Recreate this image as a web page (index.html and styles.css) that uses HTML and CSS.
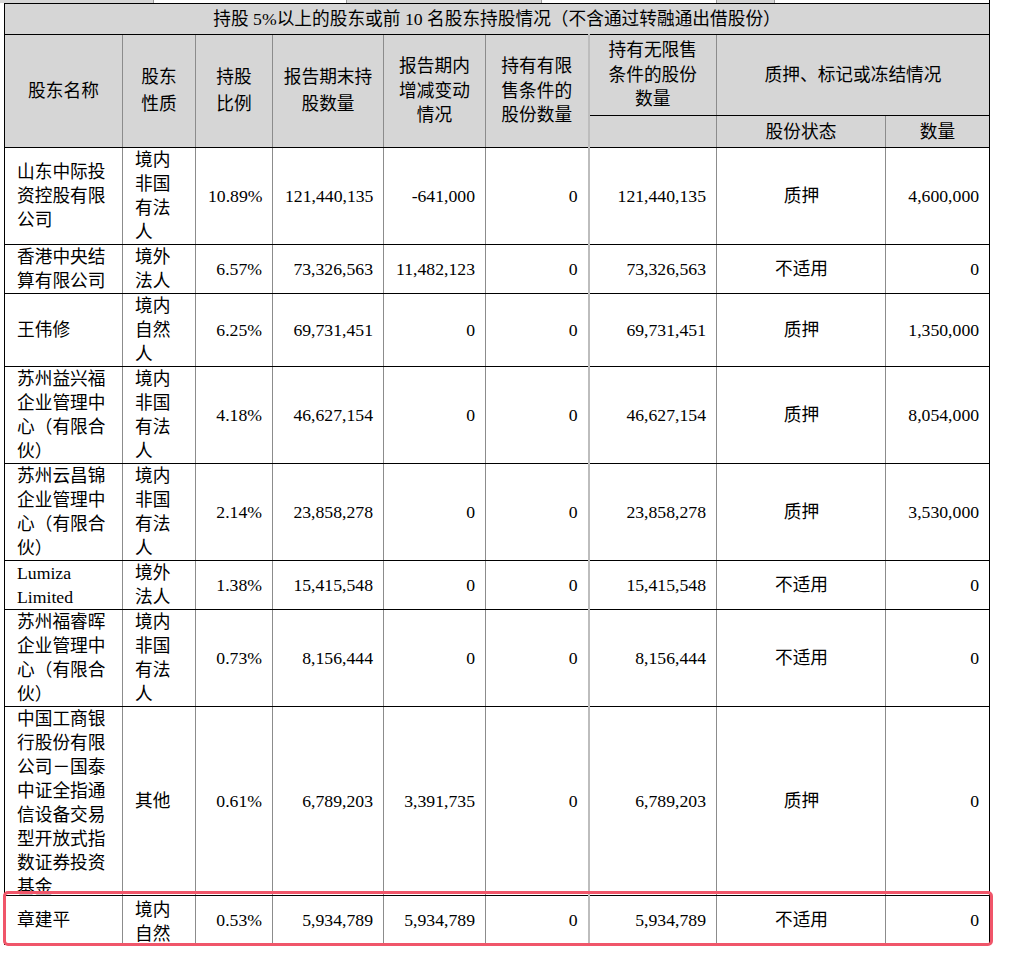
FILE: index.html
```html
<!DOCTYPE html>
<html lang="zh-CN">
<head>
<meta charset="utf-8">
<title>股东持股情况</title>
<link rel="stylesheet" href="styles.css">
</head>
<body>
<div class="page">
  <div class="prev-row">
    <span class="pc pc1"></span>
    <span class="pc pc2"></span>
    <span class="pc pc3"></span>
    <span class="pc pc4"></span>
    <span class="pc pc5"></span>
    <span class="pc pc6"></span>
  </div>
  <table class="holders">
    <colgroup>
      <col class="c1"><col class="c2"><col class="c3"><col class="c4"><col class="c5">
      <col class="c6"><col class="c7"><col class="c8"><col class="c9">
    </colgroup>
    <thead>
      <tr class="r-title">
        <th colspan="9" class="edge-l edge-r">持股 5%以上的股东或前 10 名股东持股情况（不含通过转融通出借股份）</th>
      </tr>
      <tr class="r-head1">
        <th rowspan="2" class="edge-l">股东名称</th>
        <th rowspan="2" class="two">股东<br>性质</th>
        <th rowspan="2" class="two">持股<br>比例</th>
        <th rowspan="2" class="two">报告期末持<br>股数量</th>
        <th rowspan="2">报告期内<br>增减变动<br>情况</th>
        <th rowspan="2">持有有限<br>售条件的<br>股份数量</th>
        <th class="split">持有无限售<br>条件的股份<br>数量</th>
        <th colspan="2" class="edge-r">质押、标记或冻结情况</th>
      </tr>
      <tr class="r-head2">
        <th class="split"></th>
        <th>股份状态</th>
        <th class="edge-r">数量</th>
      </tr>
    </thead>
    <tbody>
      <tr class="r97">
        <td class="name edge-l">山东中际投资控股有限公司</td>
        <td class="type">境内非国有法人</td>
        <td class="num">10.89%</td>
        <td class="num">121,440,135</td>
        <td class="num">-641,000</td>
        <td class="num">0</td>
        <td class="num split">121,440,135</td>
        <td class="status">质押</td>
        <td class="num edge-r">4,600,000</td>
      </tr>
      <tr class="r48">
        <td class="name edge-l">香港中央结算有限公司</td>
        <td class="type">境外法人</td>
        <td class="num">6.57%</td>
        <td class="num">73,326,563</td>
        <td class="num">11,482,123</td>
        <td class="num">0</td>
        <td class="num split">73,326,563</td>
        <td class="status">不适用</td>
        <td class="num edge-r">0</td>
      </tr>
      <tr class="r73">
        <td class="name edge-l">王伟修</td>
        <td class="type">境内自然人</td>
        <td class="num">6.25%</td>
        <td class="num">69,731,451</td>
        <td class="num">0</td>
        <td class="num">0</td>
        <td class="num split">69,731,451</td>
        <td class="status">质押</td>
        <td class="num edge-r">1,350,000</td>
      </tr>
      <tr class="r96">
        <td class="name edge-l">苏州益兴福企业管理中心（有限合伙）</td>
        <td class="type">境内非国有法人</td>
        <td class="num">4.18%</td>
        <td class="num">46,627,154</td>
        <td class="num">0</td>
        <td class="num">0</td>
        <td class="num split">46,627,154</td>
        <td class="status">质押</td>
        <td class="num edge-r">8,054,000</td>
      </tr>
      <tr class="r97">
        <td class="name edge-l">苏州云昌锦企业管理中心（有限合伙）</td>
        <td class="type">境内非国有法人</td>
        <td class="num">2.14%</td>
        <td class="num">23,858,278</td>
        <td class="num">0</td>
        <td class="num">0</td>
        <td class="num split">23,858,278</td>
        <td class="status">质押</td>
        <td class="num edge-r">3,530,000</td>
      </tr>
      <tr class="r48">
        <td class="name edge-l">Lumiza Limited</td>
        <td class="type">境外法人</td>
        <td class="num">1.38%</td>
        <td class="num">15,415,548</td>
        <td class="num">0</td>
        <td class="num">0</td>
        <td class="num split">15,415,548</td>
        <td class="status">不适用</td>
        <td class="num edge-r">0</td>
      </tr>
      <tr class="r97">
        <td class="name edge-l">苏州福睿晖企业管理中心（有限合伙）</td>
        <td class="type">境内非国有法人</td>
        <td class="num">0.73%</td>
        <td class="num">8,156,444</td>
        <td class="num">0</td>
        <td class="num">0</td>
        <td class="num split">8,156,444</td>
        <td class="status">不适用</td>
        <td class="num edge-r">0</td>
      </tr>
      <tr class="r189">
        <td class="name edge-l"><div class="clip clip-188">中国工商银行股份有限公司－国泰中证全指通信设备交易型开放式指数证券投资基金</div></td>
        <td class="type">其他</td>
        <td class="num">0.61%</td>
        <td class="num">6,789,203</td>
        <td class="num">3,391,735</td>
        <td class="num">0</td>
        <td class="num split">6,789,203</td>
        <td class="status">质押</td>
        <td class="num edge-r">0</td>
      </tr>
      <tr class="r49">
        <td class="name edge-l">章建平</td>
        <td class="type"><div class="clip clip-48">境内自然人</div></td>
        <td class="num">0.53%</td>
        <td class="num">5,934,789</td>
        <td class="num">5,934,789</td>
        <td class="num">0</td>
        <td class="num split">5,934,789</td>
        <td class="status">不适用</td>
        <td class="num edge-r">0</td>
      </tr>
    </tbody>
  </table>
  <div class="highlight"></div>
</div>
</body>
</html>
```

FILE: styles.css
```css
html, body {
  margin: 0;
  padding: 0;
  background: #ffffff;
}

.page {
  position: relative;
  width: 1016px;
  height: 964px;
  font-family: "Liberation Serif", "Noto Sans CJK SC", serif;
  font-size: 17.7px;
  color: #000000;
}

/* remnant of the previous table, cut off at the top edge */
.prev-row {
  display: flex;
  height: 3px;
  width: 990px;
}
.pc {
  height: 3px;
  box-sizing: border-box;
  border-right: 1px solid #9a9a9a;
}
.pc1 { width: 154px; background: #d6d6d6; }
.pc2 { width: 193px; background: #ffffff; }
.pc3 { width: 195px; background: #d6d6d6; }
.pc4 { width: 175px; background: #ffffff; }
.pc5 { width: 58px;  background: #d6d6d6; }
.pc6 { width: 215px; background: #ffffff; border-right: 1px solid #000; }

.holders {
  margin-left: 4px;
  border-collapse: collapse;
  table-layout: fixed;
  width: 986px;
  line-height: 24px;
}

.c1 { width: 118px; }
.c2 { width: 73px; }
.c3 { width: 77px; }
.c4 { width: 111px; }
.c5 { width: 102px; }
.c6 { width: 103px; }
.c7 { width: 128px; }
.c8 { width: 169px; }
.c9 { width: 104px; }

.holders th,
.holders td {
  padding: 0 11px 0 12px;
  border-left: 1px solid #8c8c8c;
  border-right: 1px solid #8c8c8c;
  border-top: 1px solid #000000;
  border-bottom: 1px solid #000000;
  vertical-align: middle;
  overflow: hidden;
}

.holders th {
  background: #d6d6d6;
  font-weight: normal;
  text-align: center;
  padding: 0 4px;
}

.holders .split {
  border-left: 2px solid #bdbdbd;
}

.holders .edge-l { border-left: 1px solid #000000; }
.holders .edge-r { border-right: 1px solid #000000; }

.r-title { height: 31px; }
.r-head1 { height: 81px; }
.r-head2 { height: 32px; }
.r-head1 th { line-height: 24.5px; }
.r-head1 th.two { line-height: 27px; }

.r48 { height: 48px; }
.r49 { height: 49px; }
.r73 { height: 73px; }
.r96 { height: 96px; }
.r97 { height: 97px; }
.r189 { height: 189px; }

.name,
.type {
  text-align: left;
}
.holders td.type {
  padding-right: 9px;
}
.num {
  text-align: right;
}
.holders td.num {
  padding-right: 10px;
}
.status {
  text-align: center;
}

.clip {
  overflow: hidden;
}
.clip-188 { height: 188px; }
.clip-48 { height: 48px; padding-top: 2px; box-sizing: border-box; }

.highlight {
  position: absolute;
  left: 3px;
  top: 891px;
  width: 984px;
  height: 49px;
  border: 3px solid #f0566a;
  border-radius: 5px;
  pointer-events: none;
}
```
